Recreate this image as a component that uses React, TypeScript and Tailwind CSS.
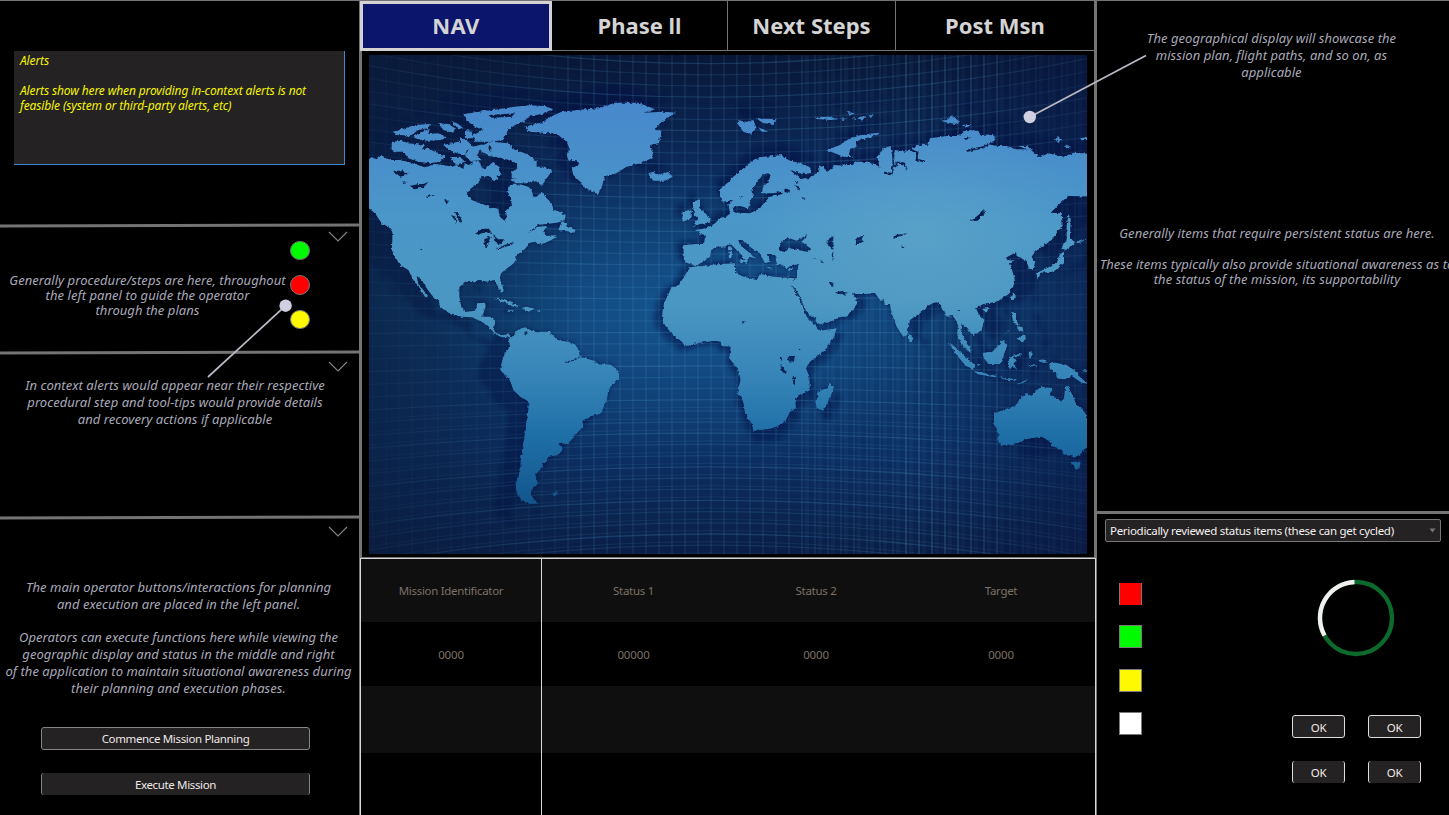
import type { ReactNode } from "react";

/* ---------- world map ---------- */

const MAP = { x: 369, y: 55, w: 718, h: 499 };

const verticals = Array.from({ length: 58 }, (_, i) => 360 + i * 13);

const arcs = Array.from({ length: 52 }, (_, i) => {
  const y0 = 30 + i * 11.2;
  const bend = ((y0 - 325) / 260) * 0.00031;
  const at = (x: number) => y0 + bend * (x - 710) * (x - 710);
  const mid = 2 * at(710) - (at(333) + at(1087)) / 2;
  return `M333 ${at(333).toFixed(1)}Q710 ${mid.toFixed(1)} 1087 ${at(1087).toFixed(1)}`;
});

function Americas() {
  return (
    <g transform="translate(365 50) scale(.33333)">
      <path d="M0 330L20 322 35 328 50 315 62 325 80 330 100 330 130 335 155 345 180 352 210 342 235 345 262 350 275 345 295 357 300 340 310 345 330 333 345 338 357 358 374 345 385 335 400 350 410 375 375 380 350 378 340 400 318 415 305 432 320 450 345 460 375 470 400 478 405 500 418 512 426 500 422 482 440 465 438 445 428 430 435 405 465 403 490 410 500 420 505 440 515 440 530 425 545 445 560 460 565 480 585 485 602 495 598 512 575 518 545 522 520 524 500 540 490 550 520 530 545 528 535 545 545 558 575 555 560 565 540 570 520 582 510 575 490 580 485 592 465 610 450 620 455 632 440 645 420 660 408 670 405 685 412 705 416 722 408 728 395 700 385 690 365 695 350 690 330 697 300 695 283 712 283 740 290 775 305 785 330 782 338 760 360 758 362 768 352 800 375 800 390 808 390 820 385 840 400 855 420 855 430 850 440 862 410 862 395 855 375 840 370 828 350 815 320 802 290 800 250 788 225 770 222 755 200 735 185 715 170 690 155 678 160 700 175 720 188 742 180 740 165 715 150 700 140 680 130 660 105 645 90 620 80 600 82 570 82 545 70 530 50 520 40 505 30 490 0 465Z" />
      <path d="M80 275L110 272 130 280 180 285 170 298 190 296 210 305 240 320 225 335 195 340 160 335 130 325 115 305 95 305 80 300Z" />
      <path d="M85 245L120 235 150 225 195 222 190 235 160 240 130 262 115 256 95 255Z" />
      <path d="M298 192L340 185 400 178 450 170 490 166 540 168 565 178 540 190 490 200 480 212 450 225 430 240 415 270 380 275 330 275 325 255 355 240 330 230 305 212ZM370 195L450 190 440 200 380 203Z" fillRule="evenodd" />
      <path d="M340 290L380 275 430 280 445 298 480 310 500 322 515 335 515 350 540 350 562 362 545 385 530 408 510 390 490 398 460 385 440 385 440 365 460 355 455 340 430 330 400 322 370 318 350 305ZM372 285L380 290 378 305 370 300Z" fillRule="evenodd" />
      <path d="M220 220L250 222 270 235 265 248 235 240ZM140 262L195 235 190 252 220 250 245 262 230 270 180 272ZM235 285L280 275 310 290 300 315 270 308 250 300ZM300 240L320 242 325 265 300 265ZM285 262L310 275 325 290 355 282 335 318 350 330 318 335 300 318 310 300 290 290ZM260 212L280 222 295 235 280 238ZM375 378L390 372 400 385 385 395ZM435 388L480 380 490 400 450 400ZM255 322L285 320 300 335 275 345Z" />
      <path d="M480 230L540 215 545 205 590 185 640 180 700 175 750 158 820 158 870 178 835 188 895 185 933 188 905 205 885 220 870 240 890 242 885 265 880 280 855 285 865 305 860 325 825 340 785 350 750 372 720 378 710 410 700 432 680 425 655 408 640 390 625 375 620 355 640 345 635 330 610 330 605 310 615 300 605 275 580 255 550 250 490 245Z" />
      <path d="M580 540L590 515 600 515 605 530 632 540 628 548 600 542ZM525 578L555 560 575 560 555 572 530 582Z" />
      <path d="M385 745L410 748 440 758 462 768 445 770 420 758ZM470 774L485 770 508 777 490 785ZM430 781L446 781 446 785 432 785ZM517 780L528 781 518 785Z" />
      <path d="M430 862L440 862 455 842 480 832 500 842 520 845 555 845 565 858 585 872 610 875 632 885 642 905 645 920 680 930 700 940 740 945 762 965 762 985 745 1005 730 1020 725 1050 708 1090 680 1098 652 1112 655 1130 630 1155 610 1182 580 1180 592 1200 580 1215 550 1220 548 1235 530 1240 535 1250 515 1270 510 1285 522 1298 500 1320 495 1335 510 1350 522 1360 495 1362 470 1350 455 1330 452 1300 460 1285 465 1250 470 1210 480 1150 490 1080 492 1055 465 1040 445 1020 435 990 415 970 405 960 412 930 420 910 435 890Z" />
      <path d="M562 1328L580 1326 576 1334 564 1334Z" />
      <g fill="#000">
        <path d="M85 362L105 362 112 358 118 368 132 370 118 375 110 380 92 374ZM135 408L160 402 175 402 190 396 176 412 150 418ZM180 443L195 432 208 433 190 440ZM270 486L278 486 292 515 286 518ZM258 495L276 520 272 500ZM238 450L252 452 245 463ZM330 552L350 536 372 536 382 552 362 546 345 553ZM358 568L378 558 372 572 365 595 358 593ZM385 556L400 568 418 568 405 584 388 572ZM392 598L420 584 448 577 440 584 400 598ZM112 394L125 396 115 399ZM166 596L173 598 168 601ZM478 846L486 843 488 852 480 853Z" />
        <path d="M630 930L650 917M600 937L630 930M550 250L565 252" stroke="#000" strokeWidth="3" />
      </g>
    </g>
  );
}

function EuropeAndNorthAfrica() {
  return (
    <g transform="translate(600 50) scale(.33333)">
      <path d="M360 415L385 397 400 380 430 355 460 330 490 320 520 318 545 315 565 330 600 340 635 355 632 368 610 375 570 360 600 385 630 385 640 375 660 365 655 345 672 350 680 365 700 355 740 345 790 345 790 725 750 722 725 715 700 700 685 692 700 722 725 742 750 740 775 755 750 785 740 800 630 800 612 770 600 740 585 715 570 702 590 685 595 645 580 643 560 655 530 640 525 612 500 612 512 635 495 640 480 610 470 605 450 590 430 570 415 570 420 585 450 610 465 625 448 620 440 640 425 615 400 590 390 580 375 590 350 590 335 600 330 620 310 635 285 648 252 635 250 585 290 582 312 582 315 560 300 550 285 540 320 535 345 520 360 505 385 498 390 490 385 462 400 450 385 452 368 455 360 440Z" />
      <path d="M278 455L300 448 300 475 312 485 332 507 330 518 300 522 278 528 295 505 282 495 280 475ZM247 485L275 478 275 505 248 515ZM143 370L160 365 170 375 205 366 218 380 195 392 160 392ZM412 210L440 215 460 210 470 235 450 252 430 245 415 225ZM468 205L530 208 520 222 490 220ZM475 232L505 245 485 245ZM712 310L725 290 740 272 765 262 770 290 750 300 745 320ZM645 202L690 200 715 208 690 210 650 207Z" />
      <path d="M385 588L394 590 394 602 387 600ZM385 605L396 605 395 625 387 625ZM415 632L440 628 436 642ZM500 652L522 654 502 657ZM562 660L580 652 570 662Z" />
      <path d="M255 655L280 650 310 648 360 642 405 640 405 665 430 680 470 690 480 672 520 680 585 685 572 705 590 740 605 775 620 800 185 800 192 760 215 720 240 700 270 650Z" />
      <g fill="#000">
        <path d="M488 372L512 375 505 395 490 410 485 430 520 430 545 425 548 432 510 440 500 450 480 475 450 490 420 488 400 488 402 470 420 468 445 475 450 455 460 440 455 425 470 395ZM535 600L545 575 560 562 590 572 615 558 622 556 605 575 635 598 620 605 570 595 550 605ZM680 570L710 553 732 570 715 578 725 600 732 620 720 640 700 635 695 615 700 600 680 580ZM552 415L570 420 568 430 555 426ZM585 405L600 412 598 422ZM605 440L618 445 608 448ZM418 438L430 440 422 446ZM590 395L596 400 588 400ZM660 628L672 635 668 640ZM640 625L650 627 645 630Z" />
        <path d="M595 368L612 385 632 372 615 372Z" />
      </g>
    </g>
  );
}

function Asia() {
  return (
    <g transform="translate(840 50) scale(.33333)">
      <path d="M-20 345L30 348 50 335 90 335 118 350 112 320 130 295 152 288 158 330 165 300 195 305 230 285 265 284 270 265 320 258 355 258 380 240 410 242 425 255 462 252 467 275 440 282 470 288 500 288 530 298 570 298 600 322 625 310 670 320 700 308 760 312 760 440 685 438 655 465 632 488 665 490 668 525 635 570 605 592 585 605 575 620 585 640 578 660 565 655 560 630 530 625 510 640 525 690 520 710 490 740 430 762 300 750 100 730 45 732 20 720-20 728Z" />
      <path d="M-40 300L0 285 25 268 60 256 115 248 118 252 60 270 30 285 25 310 40 322 10 320Z" />
      <path d="M685 490L692 510 690 560 705 580 678 600 663 595 680 570 680 530ZM672 605L672 640 640 665 602 668 596 685 588 670 620 655 650 640 660 612ZM525 730L520 755 513 745ZM300 212L320 210 335 198 360 215 345 222 325 218ZM365 225L395 222 380 234ZM645 268L655 260 666 268 656 280ZM720 265L745 262 745 270 725 271ZM668 290L680 284 694 292ZM535 288L560 288 580 300 560 298ZM0 205L20 206 10 210ZM35 205L50 200 48 210ZM55 202L78 198 66 212ZM20 185L45 190 30 196ZM85 196L102 195 90 201ZM705 580L742 565 720 578Z" />
      <g fill="#000">
        <path d="M388 517L415 495 430 478 435 482 430 495 410 512ZM155 568L170 554 210 549 180 558ZM45 570L52 563 70 558 65 570 72 574 50 584ZM182 590L198 589 188 594ZM495 625L528 607 530 618 545 625 510 632ZM370 265L395 262 378 270Z" />
        <path d="M160 310L160 350 155 372 135 368M165 350L172 338 192 340 200 358M205 292L218 302 232 308 230 328 252 335M380 303L430 292 445 282" fill="none" stroke="#000" strokeWidth="6" />
      </g>
    </g>
  );
}

function SouthAfrica() {
  return (
    <g transform="translate(630 290) scale(.33333)">
      <path d="M125-10L105 35 98 95 120 125 170 168 200 160 255 152 272 155 275 168 302 170 298 205 325 240 332 270 322 305 340 335 345 370 365 400 370 422 430 415 465 395 480 365 498 355 495 325 540 300 538 260 528 235 540 215 590 175 610 145 620 115 570 122 555 105 530 80 515 40 488-10Z" />
      <path d="M504-10L528 30 552 70 562 105 600 95 665 65 685 35 660 5 640 15 615 10 612-10Z" />
      <path d="M600 280L612 290 600 325 580 362 560 355 556 335 565 320 562 305 590 295Z" />
      <path d="M474 198L494 198 492 215 480 218 472 208ZM452 218L460 235 472 252 460 248 452 232ZM488 260L495 265 495 285 490 282ZM335 95L350 98 340 100ZM503 170L512 180 506 180ZM449 205L456 203 452 214Z" fill="#000" />
    </g>
  );
}

function IndiaToAustralia() {
  return (
    <g transform="translate(850 290) scale(.33333)">
      <path d="M-30-20L-20 5 0 10 30 12 75 10 90 30 102 28 104 45 120 45 125 70 140 110 160 140 172 135 180 90 210 70 240 42 265 35 275 55 290 80 310 78 325 105 322 135 335 165 362 190 360 170 340 140 332 120 335 100 350 115 370 138 395 120 403 90 385 70 378 55 400 42 440 35 480 10 482-20Z" />
      <path d="M295 158L315 170 340 195 375 225 370 242 345 225 320 195ZM372 243L400 248 440 258 435 262 380 252ZM398 190L430 182 460 150 472 165 462 195 450 222 415 222 402 205ZM478 200L515 190 515 195 488 205 502 212 490 220 502 240 488 228 480 238 474 228ZM484 65L498 70 498 92 510 105 490 98ZM500 145L525 132 528 150 515 158ZM505 108L518 112 520 126 505 120ZM460 138L478 120 472 130ZM565 210L588 208 590 218 572 218ZM598 228L605 216 650 225 680 245 690 262 715 282 695 278 665 258 645 268 620 265 618 245 600 240ZM695 242L712 240 705 246ZM175 130L190 145 186 156 178 156ZM397 58L416 53 408 68ZM450 262L500 268 495 272 460 268ZM500 284L535 266 520 278ZM536 185L545 185 543 205 538 205ZM555 228L562 226 558 234ZM530 225L560 225 545 229ZM380 222L392 222 385 228ZM486 10L497 15 490 32Z" />
      <path d="M432 370L445 365 500 345 505 330 530 310 545 318 560 300 575 290 607 294 600 312 635 335 642 325 645 290 653 287 665 310 680 345 700 360 712 385 730 400 730 460 700 480 690 498 665 500 640 490 625 475 605 468 600 455 575 440 530 447 500 460 455 467 445 455 445 430 432 400ZM665 515L692 515 688 535 678 540Z" />
      <circle cx="328" cy="62" r="2" fill="#000" />
    </g>
  );
}

function Land() {
  return (
    <>
      <Americas />
      <EuropeAndNorthAfrica />
      <Asia />
      <SouthAfrica />
      <IndiaToAustralia />
    </>
  );
}

function WorldMap() {
  return (
    <svg
      width={MAP.w}
      height={MAP.h}
      viewBox={`${MAP.x} ${MAP.y} ${MAP.w} ${MAP.h}`}
      className="block"
      role="img"
    >
      <defs>
        <linearGradient id="sea" x1="0" y1="0" x2="0" y2="1">
          <stop offset="0" stopColor="#081737" />
          <stop offset=".2" stopColor="#0b2857" />
          <stop offset=".5" stopColor="#0e3f73" />
          <stop offset=".78" stopColor="#0c3064" />
          <stop offset="1" stopColor="#0a1e46" />
        </linearGradient>
        <radialGradient id="glow" gradientUnits="userSpaceOnUse" cx="0" cy="0" r="1" gradientTransform="translate(700 315) scale(270 150)">
          <stop offset="0" stopColor="#19639f" stopOpacity=".65" />
          <stop offset="1" stopColor="#19639f" stopOpacity="0" />
        </radialGradient>
        <linearGradient id="edges" x1="0" x2="1" y1="0" y2="0">
          <stop offset="0" stopColor="#0a1c3c" stopOpacity=".65" />
          <stop offset=".3" stopColor="#0a1c3c" stopOpacity="0" />
          <stop offset=".75" stopColor="#081540" stopOpacity="0" />
          <stop offset="1" stopColor="#081540" stopOpacity=".5" />
        </linearGradient>
        <linearGradient id="landFill" gradientUnits="userSpaceOnUse" x1="0" y1="100" x2="0" y2="505">
          <stop offset="0" stopColor="#4788cc" />
          <stop offset=".3" stopColor="#4a97c8" />
          <stop offset=".5" stopColor="#4b97c3" />
          <stop offset=".68" stopColor="#3785b8" />
          <stop offset=".82" stopColor="#2070a8" />
          <stop offset="1" stopColor="#12558d" />
        </linearGradient>
        <radialGradient id="landGlow" gradientUnits="userSpaceOnUse" cx="0" cy="0" r="1" gradientTransform="translate(920 235) scale(170 110)">
          <stop offset="0" stopColor="#66aaca" stopOpacity=".5" />
          <stop offset="1" stopColor="#66aaca" stopOpacity="0" />
        </radialGradient>
        <filter id="coast" filterUnits="userSpaceOnUse" x="340" y="40" width="780" height="530">
          <feTurbulence type="fractalNoise" baseFrequency=".3" numOctaves="2" seed="7" result="n" />
          <feDisplacementMap in="SourceGraphic" in2="n" scale="3.4" xChannelSelector="R" yChannelSelector="G" />
        </filter>
        <filter id="soft" filterUnits="userSpaceOnUse" x="300" y="0" width="860" height="600">
          <feGaussianBlur stdDeviation="2" />
        </filter>
        <mask id="land" maskUnits="userSpaceOnUse" x="340" y="40" width="780" height="530" style={{ maskType: "luminance" }}>
          <g fill="#fff" filter="url(#coast)">
            <Land />
          </g>
        </mask>
        <g id="shadow">
          <rect x="340" y="40" width="780" height="530" fill="#020b42" mask="url(#land)" />
        </g>
      </defs>
      <rect x={MAP.x} y={MAP.y} width={MAP.w} height={MAP.h} fill="url(#sea)" />
      <rect x={MAP.x} y={MAP.y} width={MAP.w} height={MAP.h} fill="url(#glow)" />
      <use href="#shadow" opacity=".42" transform="translate(-68 -26) scale(1.09)" filter="url(#soft)" />
      <use href="#shadow" opacity=".5" filter="url(#soft)" />
      <g stroke="#5aaad8" fill="none">
        {verticals.map((x) => (
          <path key={x} d={`M${x} 55V554`} strokeWidth="1.6" opacity={x < 560 ? 0.07 : x > 900 && x < 1010 ? 0.25 : 0.13} />
        ))}
        {verticals.filter((x) => x > 800).map((x) => (
          <path key={x} d={`M${x + 5} 55V554`} strokeWidth="4" opacity=".06" />
        ))}
        {arcs.map((d, i) => (
          <path key={i} d={d} strokeWidth="1.3" opacity={i % 3 === 0 ? 0.2 : 0.14} />
        ))}
        {arcs.slice(34).map((d, i) => (
          <path key={i} d={d} strokeWidth="1" opacity=".11" transform="translate(0 -3.5)" />
        ))}
      </g>
      <rect x={MAP.x} y={MAP.y} width={MAP.w} height={MAP.h} fill="url(#edges)" />
      <g mask="url(#land)">
        <rect x={MAP.x} y={MAP.y} width={MAP.w} height={MAP.h} fill="url(#landFill)" />
        <rect x={MAP.x} y={MAP.y} width={MAP.w} height={MAP.h} fill="url(#landGlow)" />
      </g>
    </svg>
  );
}

/* ---------- shared pieces ---------- */

function Note({ lines, className = "" }: { lines: string[]; className?: string }) {
  return (
    <p className={`text-center text-[13px] tracking-[0.05px] italic whitespace-nowrap text-[#a9a9b9] ${className}`}>
      {lines.map((line, i) => (
        <span key={i} className="block">
          {line || "\u00a0"}
        </span>
      ))}
    </p>
  );
}

function Divider() {
  return <div className="h-[3px] w-full shrink-0 -rotate-[0.15deg] bg-[#747474]" />;
}

function Chevron({ className = "" }: { className?: string }) {
  return (
    <svg className={className} width="20" height="12" viewBox="0 0 20 12" fill="none" stroke="#8a8683" strokeWidth="1.1">
      <path d="M1 1l9 9 9-9" />
    </svg>
  );
}

function Pointer({ width, height, className, from, to }: { width: number; height: number; className: string; from: number[]; to: number[] }) {
  return (
    <svg className={`pointer-events-none absolute ${className}`} width={width} height={height}>
      <line x1={from[0]} y1={from[1]} x2={to[0]} y2={to[1]} stroke="#b9b8c4" strokeWidth="1.8" />
      <circle cx={to[0]} cy={to[1]} r="6.2" fill="#d0cfe2" />
    </svg>
  );
}

function WideButton({ children, className }: { children: ReactNode; className: string }) {
  return (
    <button className={`flex w-[269px] items-center justify-center rounded-[3px] bg-[#242223] text-[11.5px] tracking-[-0.35px] text-[#f0e8e8] ${className}`}>
      {children}
    </button>
  );
}

/* ---------- panels ---------- */

function LeftPanel() {
  return (
    <aside className="flex w-[359px] shrink-0 flex-col overflow-hidden">
      <section className="h-[223px] shrink-0 pt-[50px] pl-[14px]">
        <div className="h-[114px] w-[331px] border-r border-b border-[#3f87d0] bg-[#242223] pt-[2px] pl-[6px] text-[12px] leading-[15px] tracking-[-0.13px] whitespace-nowrap text-[#f5f500] italic">
          <p>Alerts</p>
          <p className="mt-[15px]">Alerts show here when providing in-context alerts is not</p>
          <p>feasible (system or third-party alerts, etc)</p>
        </div>
      </section>
      <Divider />
      <section className="flex h-[124px] shrink-0">
        <Note
          className="w-[295px] pt-[46px] leading-[15px]"
          lines={["Generally procedure/steps are here, throughout", "the left panel to guide the operator", "through the plans"]}
        />
        <div className="-ml-[5px] flex flex-col gap-[15px] pt-[14px]">
          <span className="h-[19px] w-5 rounded-full border border-[#777] bg-[#00fb00]" />
          <span className="h-[20px] w-5 rounded-full border border-[#777] bg-[#ff0000]" />
          <span className="h-[19px] w-5 rounded-full border border-[#777] bg-[#fff900]" />
        </div>
        <Chevron className="mt-[4px] ml-[18px]" />
      </section>
      <Divider />
      <section className="flex h-[162px] shrink-0 flex-col">
        <Chevron className="mt-[7px] ml-[328px] shrink-0" />
        <Note
          className="w-[350px] pt-[4px] leading-[17px]"
          lines={["In context alerts would appear near their respective", "procedural step and tool-tips would provide details", "and recovery actions if applicable"]}
        />
      </section>
      <Divider />
      <section className="flex flex-1 flex-col">
        <Chevron className="mt-[7px] ml-[328px] shrink-0" />
        <Note
          className="w-[357px] pt-[41px] leading-[16.8px]"
          lines={[
            "The main operator buttons/interactions for planning",
            "and execution are placed in the left panel.",
            "",
            "Operators can execute functions here while viewing the",
            "geographic display and status in the middle and right",
            "of the application to maintain situational awareness during",
            "their planning and execution phases.",
          ]}
        />
        <div className="flex flex-col gap-[23px] pt-[30px] pl-[41px]">
          <WideButton className="h-[23px] border border-[#858585] pt-px">Commence Mission Planning</WideButton>
          <WideButton className="h-[22px] border-x border-[#858585] pt-[2px]">Execute Mission</WideButton>
        </div>
      </section>
    </aside>
  );
}

const rows = [
  { bg: "bg-[#0f0f0f]", h: "h-[63px]", cells: ["Mission Identificator", "Status 1", "Status 2", "Target"], tone: "tracking-[-0.3px]" },
  { bg: "bg-black", h: "h-[64px]", cells: ["0000", "00000", "0000", "0000"], tone: "tracking-[-0.15px] pt-[2px]" },
  { bg: "bg-[#0f0f0f]", h: "h-[67px]", cells: ["", "", "", ""], tone: "" },
  { bg: "bg-black", h: "h-[62px]", cells: ["", "", "", ""], tone: "" },
];

function CenterPanel() {
  return (
    <main className="flex w-[738px] shrink-0 flex-col">
      <nav className="flex h-[50px] shrink-0 border-l border-[#747474] text-[22px] font-bold text-[#d4d4d4]">
        <button className="w-[192px] border-[3px] border-[#d6d2d4] bg-[#0c156c] pb-[2px] tracking-[0.3px]">NAV</button>
        <div className="flex flex-1 border-r-[3px] border-b border-[#747474]">
          <button className="w-[176px] border-r border-[#747474]">
            Phase <span className="font-['Roboto',sans-serif]">II</span>
          </button>
          <button className="w-[168px] border-r border-[#747474]">Next Steps</button>
          <button className="flex-1">Post Msn</button>
        </div>
      </nav>
      <div className="h-[507px] shrink-0 border-x-[3px] border-b border-[#747474] pt-[4px] pl-[7px]">
        <WorldMap />
      </div>
      <div className="flex flex-1 flex-col border-x border-[#747474]">
        <div className="flex flex-1 flex-col border border-b-0 border-[#d8d8d8]">
          {rows.map((row, i) => (
            <div key={i} className={`flex shrink-0 items-center text-center text-[11.5px] text-[#7b7167] ${row.bg} ${row.h}`}>
              <span className="flex h-full w-[181px] items-center justify-center border-r border-[#d8d8d8]">
                <span className={row.tone}>{row.cells[0]}</span>
              </span>
              <span className={`w-[183px] ${row.tone}`}>{row.cells[1]}</span>
              <span className={`w-[182px] ${row.tone}`}>{row.cells[2]}</span>
              <span className={`flex-1 ${row.tone}`}>{row.cells[3]}</span>
            </div>
          ))}
        </div>
      </div>
    </main>
  );
}

const swatches = [
  "h-[22px] border-x bg-[#ff0000]",
  "h-[23px] border bg-[#00fb00] mt-[20px]",
  "h-[23px] border bg-[#fff900] mt-[21px]",
  "h-[23px] border bg-white mt-[20px]",
];

function RightPanel() {
  return (
    <aside className="flex w-[352px] shrink-0 flex-col overflow-hidden">
      <section className="h-[510px] shrink-0 pt-[29px]">
        <Note
          className="w-[349px] leading-[17px]"
          lines={["The geographical display will showcase the", "mission plan, flight paths, and so on, as", "applicable"]}
        />
        <Note
          className="-ml-[20px] w-[400px] pt-[145px] leading-[15.4px]"
          lines={["Generally items that require persistent status are here.", "", "These items typically also provide situational awareness as to", "the status of the mission, its supportability"]}
        />
      </section>
      <div className="h-[3px] shrink-0 bg-[#747474]" />
      <section className="flex-1 pt-[5px]">
        <div className="ml-[8px] flex h-[23px] w-[336px] items-center justify-between rounded-[2px] border border-[#767676] bg-[#242223] pr-[4px] pl-[4px] text-[11.5px] tracking-[-0.3px] text-[#f4f0f0]">
          <span className="whitespace-nowrap">Periodically reviewed status items (these can get cycled)</span>
          <svg width="7" height="5">
            <path d="M.5 .5h6L3.5 4.5z" fill="#777" />
          </svg>
        </div>
        <div className="flex">
          <div className="flex w-[195px] flex-col pt-[41px] pl-[22px]">
            {swatches.map((tone) => (
              <span key={tone} className={`w-[23px] border-[#7a7a7a] ${tone}`} />
            ))}
          </div>
          <div className="flex flex-col pt-[37px]">
            <svg className="ml-[25px]" width="78" height="78" viewBox="-39 -39 78 78" fill="none" strokeWidth="4.4">
              <circle r="36" stroke="#0d6a2d" />
              <path d="M-31.5 17.5A36 36 0 0 1-1.5-36" stroke="#f1efef" />
            </svg>
            <div className="grid grid-cols-2 gap-x-[23px] gap-y-[23px] pt-[58px] text-[11.5px] tracking-[-0.2px] text-[#f0e8e8]">
              <button className="h-[23px] w-[53px] rounded-[3px] border border-[#dedede] bg-[#242223] pt-[2px]">OK</button>
              <button className="h-[23px] w-[53px] rounded-[3px] border border-[#dedede] bg-[#242223] pt-[2px]">OK</button>
              <button className="h-[22px] w-[53px] rounded-[3px] border-x border-[#dedede] bg-[#242223] pt-[2px]">OK</button>
              <button className="h-[22px] w-[53px] rounded-[3px] border-x border-[#dedede] bg-[#242223] pt-[2px]">OK</button>
            </div>
          </div>
        </div>
      </section>
    </aside>
  );
}

export default function App() {
  return (
    <div className="relative flex h-[815px] w-[1449px] overflow-hidden border-t border-[#747474] bg-black font-['Noto_Sans','Open_Sans',sans-serif]">
      <LeftPanel />
      <CenterPanel />
      <RightPanel />
      <Pointer className="top-[296px] left-[200px]" width={96} height={84} from={[8, 80]} to={[85.6, 8.7]} />
      <Pointer className="top-[50px] left-[1020px]" width={130} height={80} from={[126, 4.5]} to={[9.8, 66]} />
    </div>
  );
}
